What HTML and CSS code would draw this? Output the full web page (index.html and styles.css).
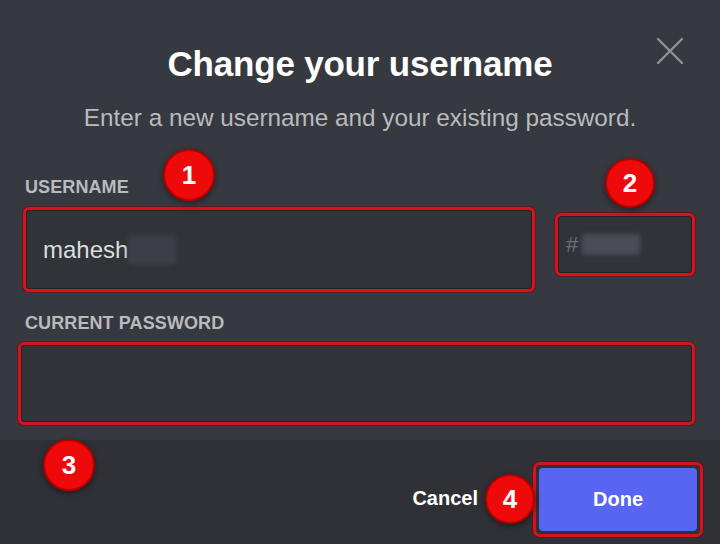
FILE: index.html
```html
<!DOCTYPE html>
<html lang="en">

<head>
    <meta charset="UTF-8">
    <meta name="viewport" content="width=device-width, initial-scale=1.0">
    <title>Change your username</title>
    <link rel="stylesheet" href="styles.css">
</head>

<body>
    <div class="modal">
        <button class="close-btn" aria-label="Close">
            <svg width="28" height="28" viewBox="0 0 28 28">
                <path d="M2 2 L26 26 M26 2 L2 26" stroke="currentColor" stroke-width="2.4" stroke-linecap="round" fill="none" />
            </svg>
        </button>

        <div class="header">
            <h1>Change your username</h1>
            <p>Enter a new username and your existing password.</p>
        </div>

        <div class="form">
            <label class="field-label label-username">Username</label>
            <div class="username-row">
                <div class="input-box username-box">
                    <span class="input-text">mahesh</span>
                    <span class="blurred blurred-name"></span>
                </div>
                <div class="input-box tag-box">
                    <span class="hash">#</span>
                    <span class="blurred blurred-tag"></span>
                </div>
            </div>

            <label class="field-label label-password">Current Password</label>
            <div class="input-box password-box"></div>
        </div>

        <div class="footer">
            <button class="cancel-btn">Cancel</button>
            <div class="done-outline">
                <button class="done-btn">Done</button>
            </div>
        </div>

        <!-- annotation markers -->
        <span class="step step-1">1</span>
        <span class="step step-2">2</span>
        <span class="step step-3">3</span>
        <span class="step step-4">4</span>
    </div>
</body>

</html>
```

FILE: styles.css
```css
* {
    margin: 0;
    padding: 0;
    box-sizing: border-box;
}

body {
    font-family: 'Liberation Sans', Arial, sans-serif;
    background: #36393f;
    color: #dcddde;
}

.modal {
    position: relative;
    width: 720px;
    height: 544px;
    background: #36393f;
    display: flex;
    flex-direction: column;
}

.close-btn {
    position: absolute;
    top: 37px;
    right: 36px;
    width: 28px;
    height: 28px;
    background: none;
    border: none;
    color: #8e9297;
    cursor: pointer;
}

.header {
    text-align: center;
    padding-top: 40px;
}

.header h1 {
    font-size: 35px;
    line-height: 48px;
    font-weight: 700;
    color: #ffffff;
    letter-spacing: -0.2px;
}

.header p {
    margin-top: 15px;
    font-size: 24.3px;
    line-height: 30px;
    color: #b9bbbe;
}

.form {
    padding: 0 25px 0 23px;
}

.field-label {
    display: block;
    font-size: 18px;
    line-height: 22px;
    font-weight: 700;
    text-transform: uppercase;
    color: #b9bbbe;
    letter-spacing: 0.1px;
}

.label-username {
    margin-top: 43px;
    padding-left: 2px;
}

.label-password {
    margin-top: 20px;
    padding-left: 2px;
}

.input-box {
    display: flex;
    align-items: center;
    background: #303338;
    border: 3px solid #d3131d;
    border-radius: 6px;
    box-shadow: 0 0 0 1px rgba(110, 10, 15, 0.6), inset 0 0 0 1px rgba(20, 20, 24, 0.5);
}

.username-row {
    display: flex;
    align-items: flex-start;
    margin-top: 9px;
}

.username-box {
    width: 512px;
    height: 85px;
    padding-left: 17px;
}

.input-text {
    font-size: 24px;
    color: #dcddde;
}

.blurred {
    display: inline-block;
    background: #43464d;
    filter: blur(2px);
    border-radius: 2px;
}

.blurred-name {
    width: 48px;
    height: 30px;
    background: #3c3f46;
}

.tag-box {
    width: 140px;
    height: 63px;
    margin-left: 20px;
    margin-top: 6px;
    padding-left: 8px;
}

.hash {
    font-size: 22px;
    color: #6c6f76;
}

.blurred-tag {
    width: 58px;
    height: 21px;
    margin-left: 4px;
    background: #4a4d55;
}

.password-box {
    width: 677px;
    height: 83px;
    margin-top: 8px;
    margin-left: -5px;
}

.footer {
    margin-top: auto;
    height: 104px;
    background: #2f3136;
    display: flex;
    justify-content: flex-end;
    align-items: flex-start;
    padding: 22px 17px 0 0;
}

.cancel-btn {
    background: none;
    border: none;
    color: #ffffff;
    font-family: inherit;
    font-size: 20px;
    font-weight: 700;
    margin-top: 25px;
    margin-right: 55px;
    cursor: pointer;
}

.done-outline {
    width: 170px;
    height: 75px;
    padding: 3px;
    border: 3px solid #d3131d;
    border-radius: 7px;
    box-shadow: 0 0 0 1px rgba(110, 10, 15, 0.6);
}

.done-btn {
    width: 100%;
    height: 100%;
    background: #5865f2;
    border: none;
    border-radius: 4px;
    color: #ffffff;
    font-family: inherit;
    font-size: 20px;
    font-weight: 700;
    cursor: pointer;
}

.step {
    position: absolute;
    width: 52px;
    height: 52px;
    border-radius: 50%;
    background: #ee0a0a;
    border: 2px solid #b30000;
    box-shadow: 0 2px 6px rgba(0, 0, 0, 0.45);
    color: #ffffff;
    font-size: 26px;
    font-weight: 700;
    display: flex;
    align-items: center;
    justify-content: center;
}

.step-1 {
    left: 163px;
    top: 149px;
}

.step-2 {
    left: 605px;
    top: 158px;
    width: 50px;
    height: 50px;
}

.step-3 {
    left: 43px;
    top: 439px;
}

.step-4 {
    left: 485px;
    top: 474px;
    width: 50px;
    height: 50px;
}
```
